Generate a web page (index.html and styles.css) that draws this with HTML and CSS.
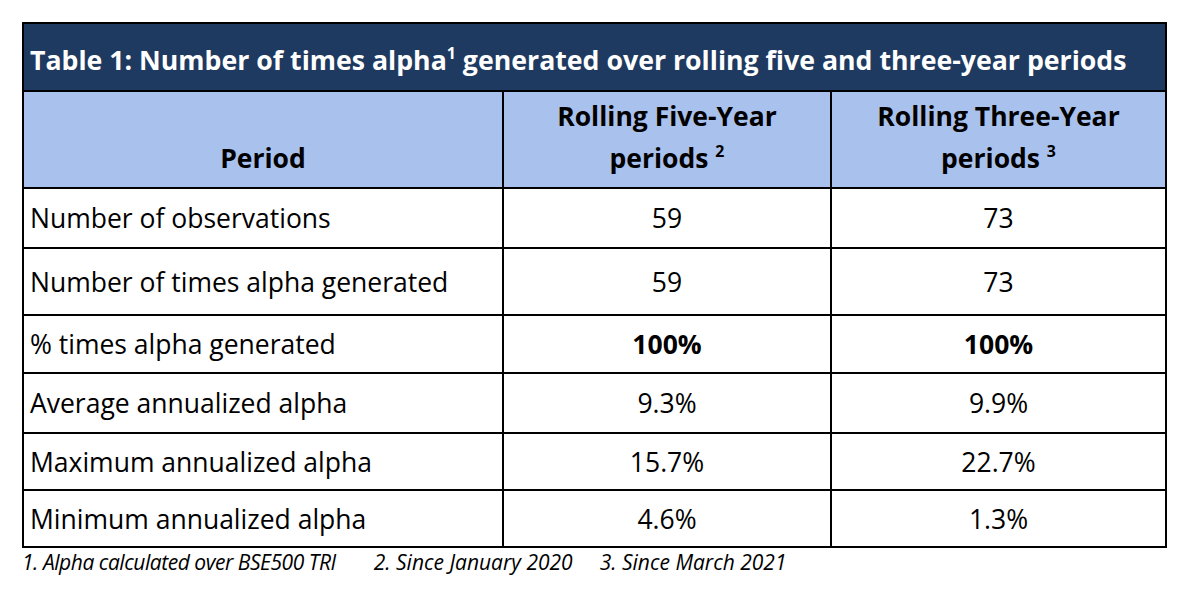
FILE: index.html
```html
<!DOCTYPE html>
<html>
<head>
<meta charset="utf-8">
<link rel="stylesheet" href="styles.css">
</head>
<body>
<div class="wrap">
  <table class="data">
    <colgroup>
      <col class="c1"><col class="c2"><col class="c3">
    </colgroup>
    <tr class="title-row">
      <td colspan="3" class="title">Table 1: Number of times alpha<sup>1</sup> generated over rolling five and three-year periods</td>
    </tr>
    <tr class="head-row">
      <th>Period</th>
      <th>Rolling Five-Year<br>periods <sup>2</sup></th>
      <th>Rolling Three-Year<br>periods <sup>3</sup></th>
    </tr>
    <tr class="r1"><td class="lbl">Number of observations</td><td>59</td><td>73</td></tr>
    <tr class="r2"><td class="lbl">Number of times alpha generated</td><td>59</td><td>73</td></tr>
    <tr class="r3"><td class="lbl">% times alpha generated</td><td class="b">100%</td><td class="b">100%</td></tr>
    <tr class="r4"><td class="lbl">Average annualized alpha</td><td>9.3%</td><td>9.9%</td></tr>
    <tr class="r5"><td class="lbl">Maximum annualized alpha</td><td>15.7%</td><td>22.7%</td></tr>
    <tr class="r6"><td class="lbl">Minimum annualized alpha</td><td>4.6%</td><td>1.3%</td></tr>
  </table>
  <p class="notes"><span class="n1">1. Alpha calculated over BSE500 TRI</span><span class="n2">2. Since January 2020</span><span class="n3">3. Since March 2021</span></p>
</div>
</body>
</html>
```
FILE: styles.css
```css
html, body {
  margin: 0;
  padding: 0;
  background: #ffffff;
}
body {
  font-family: "Open Sans", "Noto Sans", sans-serif;
  color: #000000;
}
.wrap {
  padding: 22px 0 0 22px;
}
.data {
  border-collapse: separate;
  border-spacing: 0;
  border-top: 2px solid #000;
  border-left: 2px solid #000;
  width: 1145px;
  table-layout: fixed;
}
.c1 { width: 480px; }
.c2 { width: 328px; }
.c3 { width: 335px; }
.data td, .data th {
  border-right: 2px solid #000;
  border-bottom: 2px solid #000;
  padding: 0;
  box-sizing: border-box;
  text-align: center;
  vertical-align: middle;
  font-size: 26.5px;
  font-weight: 400;
  line-height: 34px;
}
.data td.lbl {
  text-align: left;
  padding-left: 6px;
}
.data td.b {
  font-weight: 700;
}
.title-row td.title {
  background: #1f3a60;
  color: #ffffff;
  font-weight: 700;
  font-size: 26.7px;
  text-align: left;
  padding-left: 6px;
  padding-top: 6px;
  height: 68px;
}
sup {
  font-size: 0.6em;
  line-height: 0;
  vertical-align: 0.7em;
}
.head-row th {
  background: #a9c1ed;
  font-weight: 700;
  height: 97px;
  vertical-align: bottom;
  padding-bottom: 8px;
  line-height: 42px;
}
.r1 td { height: 60px; }
.r2 td { height: 67px; }
.r3 td { height: 58px; }
.r4 td { height: 60px; }
.r5 td { height: 57px; }
.r6 td { height: 57px; }
.notes {
  margin: 0;
  font-size: 21px;
  line-height: 28px;
  font-style: italic;
  display: flex;
}
.n1 {
  letter-spacing: -0.45px;
  margin-right: 38px;
}
.n2 { margin-right: 27px; }
```
